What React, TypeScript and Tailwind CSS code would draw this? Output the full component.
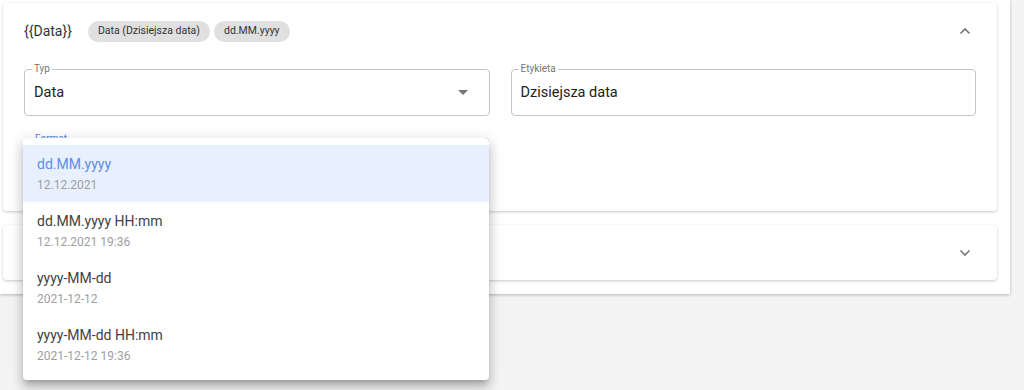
import React from 'react';

type FormatOption = {
  pattern: string;
  example: string;
};

const options: FormatOption[] = [
  { pattern: 'dd.MM.yyyy', example: '12.12.2021' },
  { pattern: 'dd.MM.yyyy HH:mm', example: '12.12.2021 19:36' },
  { pattern: 'yyyy-MM-dd', example: '2021-12-12' },
  { pattern: 'yyyy-MM-dd HH:mm', example: '2021-12-12 19:36' },
];

function Chevron({ up }: { up?: boolean }) {
  return (
    <svg width="12" height="8" viewBox="0 0 12 8" className="text-[#757575]">
      <path
        d={up ? 'M1.5 6.5 L6 2 L10.5 6.5' : 'M1.5 1.5 L6 6 L10.5 1.5'}
        fill="none"
        stroke="currentColor"
        strokeWidth="1.6"
      />
    </svg>
  );
}

function OutlinedField({
  label,
  value,
  select,
}: {
  label: string;
  value: string;
  select?: boolean;
}) {
  return (
    <div className="relative flex-1 h-[47px] border border-[#c4c4c4] rounded-[4px] flex items-center px-[9px]">
      <span className="absolute -top-[7px] left-[7px] bg-white px-[2px] text-[10px] leading-[12px] text-[#757575]">
        {label}
      </span>
      <span className="text-[14.5px] text-[#212121] flex-1">{value}</span>
      {select && (
        <svg width="10" height="5" viewBox="0 0 10 5" className="mr-[12px]">
          <path d="M0 0 L10 0 L5 5 Z" fill="#757575" />
        </svg>
      )}
    </div>
  );
}

export default function App() {
  const [selected, setSelected] = React.useState(0);

  return (
    <div
      className="min-h-[390px] w-[1024px] bg-[#f4f4f4] overflow-hidden"
      style={{ fontFamily: 'Roboto, "Liberation Sans", sans-serif' }}
    >
      <div className="relative w-[1010px] bg-white shadow-[0_1px_3px_rgba(0,0,0,0.25)] pl-[3px] pr-[13px] pt-[3px] pb-[14px] flex flex-col gap-[14px]">
        {/* Card 1 */}
        <div className="h-[208px] bg-white rounded-[4px] shadow-[0_1px_3px_rgba(0,0,0,0.22)] px-[21px]">
          <div className="h-[55px] flex items-center pt-[1px]">
            <span className="text-[14px] text-[#333]">{'{{Data}}'}</span>
            <div className="flex items-center gap-[4px] ml-[16px]">
              <span className="h-[21px] px-[10px] rounded-full bg-[#e0e0e0] text-[10.5px] text-[#333] flex items-center">
                Data (Dzisiejsza data)
              </span>
              <span className="h-[21px] px-[10px] rounded-full bg-[#e0e0e0] text-[10.5px] text-[#333] flex items-center">
                dd.MM.yyyy
              </span>
            </div>
            <div className="ml-auto mr-[5px] flex items-center">
              <Chevron up />
            </div>
          </div>
          <div className="flex gap-[21px] mt-[11px]">
            <OutlinedField label="Typ" value="Data" select />
            <OutlinedField label="Etykieta" value="Dzisiejsza data" />
          </div>
          <div className="flex mt-[22px] w-[465px]">
            <div className="relative flex-1 h-[47px] border-2 border-[#4a86e8] rounded-[4px]">
              <span className="absolute -top-[7px] left-[7px] bg-white px-[2px] text-[10px] leading-[12px] text-[#4a86e8]">
                Format
              </span>
            </div>
          </div>
        </div>

        {/* Card 2 */}
        <div className="h-[55px] bg-white rounded-[4px] shadow-[0_1px_3px_rgba(0,0,0,0.22)] px-[21px] flex items-center">
          <div className="ml-auto mr-[5px] flex items-center">
            <Chevron />
          </div>
        </div>
      </div>

      {/* Dropdown menu */}
      <div className="absolute left-[23px] top-[138px] w-[466px] bg-white rounded-[4px] shadow-[0_5px_5px_-3px_rgba(0,0,0,0.2),0_8px_10px_1px_rgba(0,0,0,0.14),0_3px_14px_2px_rgba(0,0,0,0.12)] py-[7px]">
        {options.map((opt, i) => (
          <div
            key={opt.pattern}
            onClick={() => setSelected(i)}
            className={
              'h-[57px] px-[14px] flex flex-col justify-center cursor-pointer ' +
              (i === selected ? 'bg-[#e8f0fe]' : 'bg-white')
            }
          >
            <span
              className={
                'text-[14px] leading-[20px] ' +
                (i === selected ? 'text-[#5b8ee6]' : 'text-[#424242]')
              }
            >
              {opt.pattern}
            </span>
            <span className="text-[12px] leading-[16px] mt-[3px] text-[#9e9e9e]">
              {opt.example}
            </span>
          </div>
        ))}
      </div>
    </div>
  );
}
